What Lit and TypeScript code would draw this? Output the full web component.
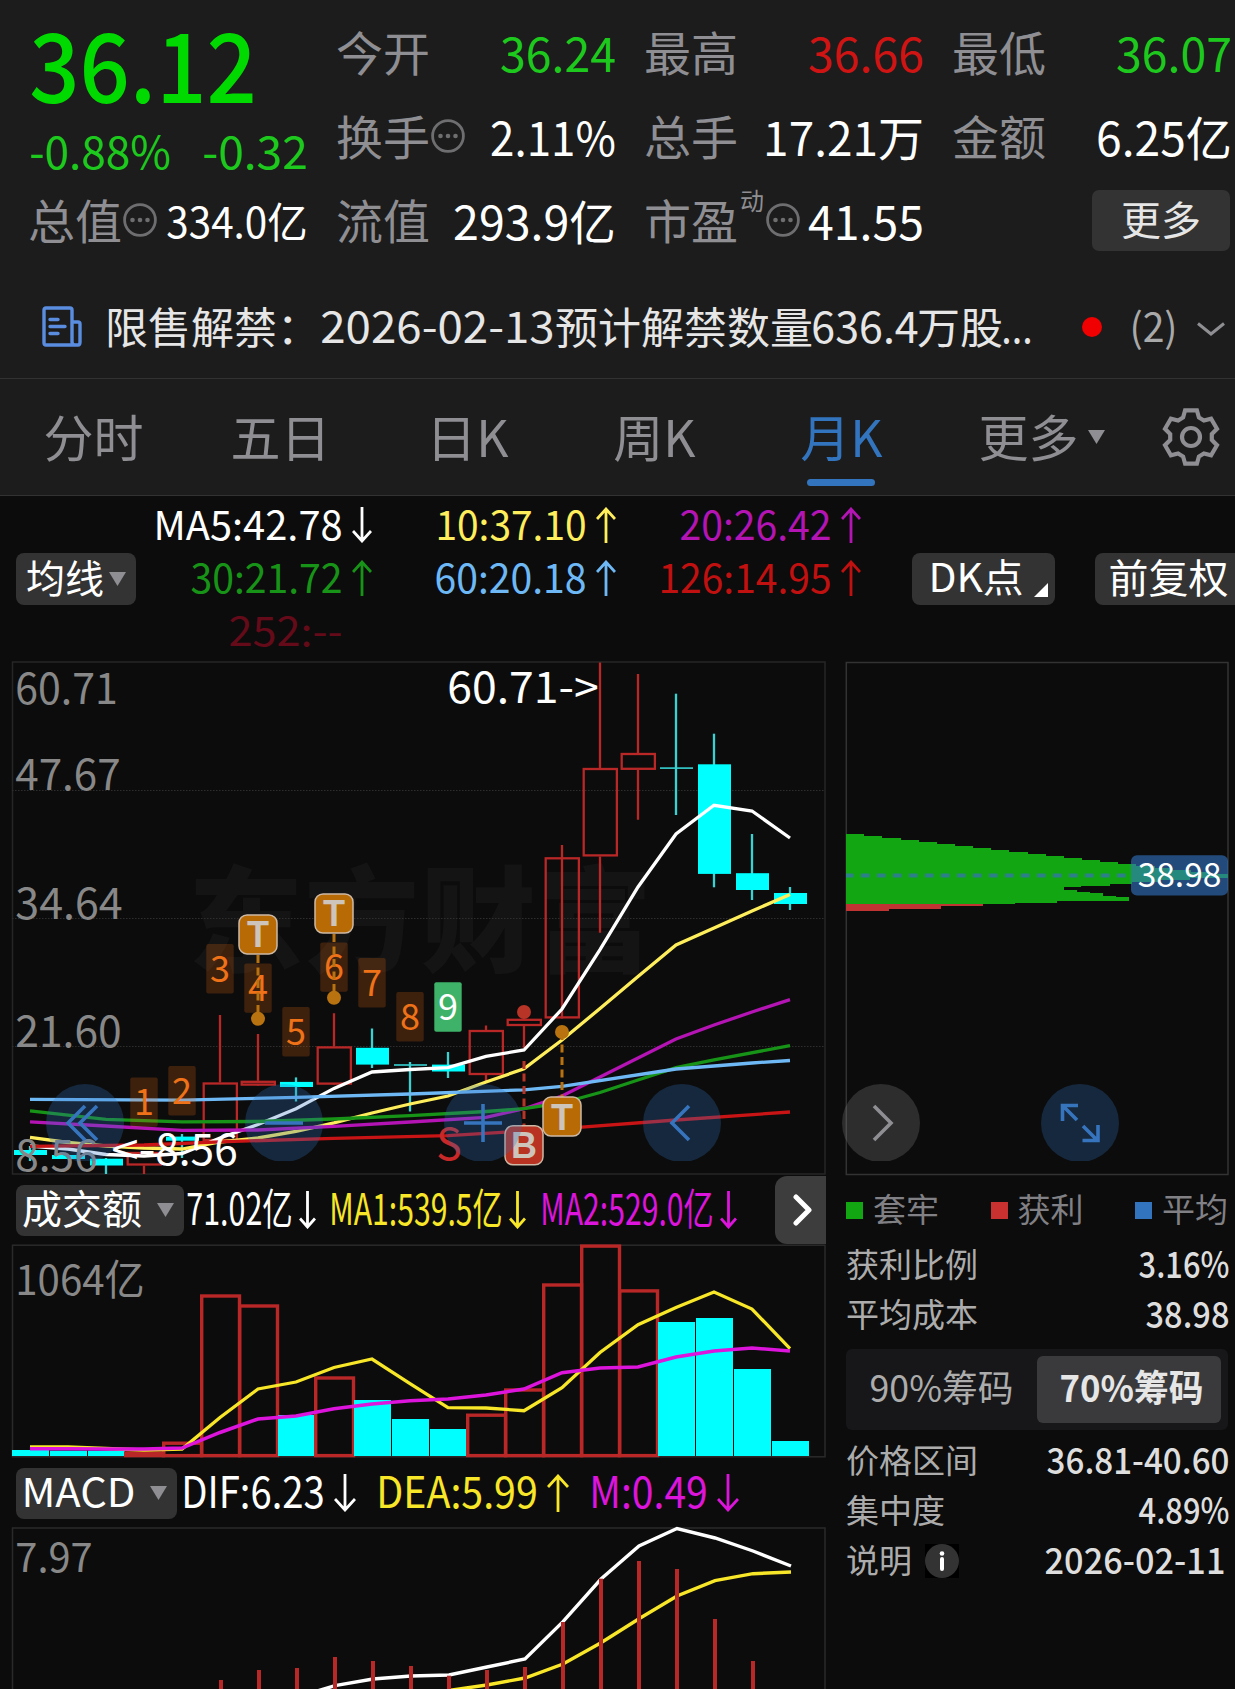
import { LitElement, html, svg, css, nothing } from "lit";
import { customElement, property } from "lit/decorators.js";

const X0 = 30;
const PITCH = 38;
const cx = (i: number) => X0 + PITCH * i;

// Indexed series -> polyline points; null entries are interpolated by the line itself
const pts = (ys: (number | null)[], shift = 0) =>
  ys.map((y, i) => (y === null ? "" : `${cx(i) + shift},${y}`)).filter(Boolean).join(" ");

// [up, bodyTop, bodyBottom, wickTop, wickBottom]
const CANDLES: [boolean, number, number, number, number][] = [
  [false, 1150, 1155, 1146, 1161],
  [false, 1155, 1159, 1155, 1159],
  [false, 1158.7, 1165.5, 1158, 1174],
  [true, 1152, 1165.5, 1152, 1174],
  [false, 1136.6, 1140.7, 1134, 1158],
  [true, 1082.5, 1141, 1015, 1141],
  [true, 1080.8, 1085.6, 1034, 1085],
  [false, 1081.9, 1087, 1077.4, 1101.5],
  [true, 1046.4, 1084.6, 1013.3, 1084],
  [false, 1047.8, 1064.6, 1028.5, 1068],
  [false, 1064.2, 1065.8, 1062, 1111.5],
  [false, 1064.6, 1071.5, 1052, 1078],
  [true, 1030, 1075, 1025.4, 1082],
  [true, 1018.8, 1026, 1006, 1048],
  [true, 857.3, 1018.4, 845, 857],
  [true, 768, 856.4, 662.4, 932.7],
  [true, 753, 769.8, 674, 819.8],
  [false, 767.3, 768.9, 693.7, 815],
  [false, 764.3, 873.9, 733.7, 887.3],
  [false, 873.2, 890, 834, 900],
  [false, 893, 904, 887, 910],
];

const N = null;
const MA_LINES: [string, (number | null)[]][] = [
  ["#ffffff", [1146, 1149, 1154.5, 1156, 1153.5, 1138, 1124.5, 1108.7, 1088.4, 1072, 1069.5, 1067.7, 1056.4, 1050, 1009, 949.6, 887, 834, 805.3, 811, 838]],
  ["#ffee5c", [1137.3, 1142.5, 1146, 1148, 1149, 1142, 1138, 1131.5, 1122.8, 1113, 1104, 1096, 1082, 1068.8, 1040, 1008.5, 976.5, 945, 928, 911, 894.5]],
  ["#b414b4", [1121.8, N, 1126, N, 1130.4, N, 1130, N, 1126.3, N, 1122, N, 1117.3, 1108.7, 1096, 1077, 1058, 1039, 1025, 1012, 999.6]],
  ["#179417", [1110.8, N, 1119.4, N, 1121.8, N, 1121.5, N, 1119, N, 1115.6, N, 1111.5, 1108.7, 1103, 1092.5, 1080, 1067.7, 1059.8, N, 1045.7]],
  ["#c81414", [1146.3, N, N, 1145, N, 1141.8, N, N, 1138.3, N, N, 1135.6, N, N, 1128.7, N, N, 1120, N, N, 1112]],
  ["#6eb9f5", [1099.4, N, N, N, 1100.2, N, N, 1097.4, N, N, 1094, N, N, 1089.8, 1086.3, N, N, 1069, N, 1063, 1060.5]],
];

// [index, top, label]
const TAGS: [number, number, string][] = [
  [3, 1077.4, "1"], [4, 1066, "2"], [5, 944, "3"], [6, 963.4, "4"], [7, 1007, "5"],
  [8, 942.4, "6"], [9, 958, "7"], [10, 992, "8"], [11, 982.3, "9"],
];

const VOL: [boolean, number][] = [
  [false, 1450], [false, 1450.7], [false, 1450.7], [true, 1451.5], [true, 1441.7],
  [true, 1294.5], [true, 1304.5], [false, 1415], [true, 1376.5], [false, 1400],
  [false, 1419], [false, 1429], [true, 1413.7], [true, 1388.5], [true, 1283.5],
  [true, 1244.6], [true, 1289.4], [false, 1322], [false, 1318], [false, 1369], [false, 1441],
];
const VOL_MA1 = [1447, 1447, 1448.5, 1450, 1449, 1417.5, 1389, 1382, 1367.5, 1359, 1383.7, 1407.7, 1408, 1410.7, 1387.7, 1352.5, 1324.7, 1307.5, 1292, 1309, 1348.7];
const VOL_MA2 = [1448.7, 1448.7, 1448.9, 1448.9, 1448, 1432.5, 1419, 1416, 1408.7, 1404, 1400.7, 1399, 1395, 1389, 1372.7, 1368, 1367, 1357, 1351, 1348, 1351];

const MACD_BARS: (number | null)[] = [N, N, N, N, N, 1680, 1670, 1668, 1657, 1661, 1666, 1675.7, 1670, 1667, 1622, 1578.7, 1561, 1569, 1619, 1661];
const DIF: (number | null)[] = [N, N, N, N, N, N, 1710, 1697, 1685.7, 1679, 1676, 1675, 1667, 1659, 1621.7, 1579, 1546, 1528.5, 1538, 1551, 1566];
const DEA: (number | null)[] = [N, N, N, N, N, N, N, N, N, N, 1697, 1690.5, 1685, 1678, 1664, 1642.7, 1618.7, 1596, 1580.7, 1573.7, 1572];

// Chip distribution rows: [top, bottom, right edge]
const CHIPS: [number, number, number][] = [
  ...Array.from({ length: 20 }, (_, k): [number, number, number] => [834.4 + k * 1.98, 837.4 + k * 1.98, 864.2 + k * 18.15]),
  [873.8, 878, 1227.5], [877.4, 880, 1190], [879.4, 882, 1160], [881.4, 884, 1132],
  [883, 885.5, 1110], [885, 887, 1081], [886.3, 888, 1051.6], [887.4, 890, 1064.3],
  [889.6, 892, 1077], [891.6, 894, 1090], [893.4, 896, 1103], [895.5, 898, 1116],
  [897.2, 901, 1128.7], [900.6, 902.6, 1057.3], [902.2, 904.4, 1015],
];

// Single text run stretched to a given visible width
const fit = (text: string, size: number, w: number, dy = 0) => html`
  <svg class="fit" width=${w} height=${1.45 * size} aria-label=${text}>
    <text x=${-0.04 * size} y=${1.161 * size + dy} font-size=${size}
      textLength=${w + 0.08 * size} lengthAdjust="spacingAndGlyphs">${text}</text>
  </svg>`;

const st = (text: string, x: number, y: number, size: number, w: number, fill: string) => svg`
  <text x=${x - 0.04 * size} y=${y} font-size=${size} fill=${fill}
    textLength=${w + 0.08 * size} lengthAdjust="spacingAndGlyphs">${text}</text>`;

const arrow = (up: boolean, w = 20, h = 36) => html`
  <svg class="arrow" width=${w} height=${h} fill="none" stroke="currentColor" stroke-width="2.8">
    <path d=${up
      ? `M${w / 2} ${h}V2M1 ${w / 2 + 2}L${w / 2} 2L${w - 1} ${w / 2 + 2}`
      : `M${w / 2} 0V${h - 2}M1 ${h - w / 2 - 2}L${w / 2} ${h - 2}L${w - 1} ${h - w / 2 - 2}`}></path>
  </svg>`;

const dots = html`
  <svg class="dots" width="34" height="34" viewBox="0 0 34 34" fill="#6e6e70">
    <circle cx="17" cy="17" r="15.4" fill="none" stroke="#6e6e70" stroke-width="2.8"></circle>
    <circle cx="9.5" cy="17" r="2.3"></circle><circle cx="17" cy="17" r="2.3"></circle><circle cx="24.5" cy="17" r="2.3"></circle>
  </svg>`;

const caret = html`<svg class="caret" width="17" height="14"><path d="M0 0H17L8.5 14Z" fill="#8e8e93"></path></svg>`;

const gearPath = (() => {
  const out: string[] = [];
  for (let k = 0; k < 6; k++) {
    for (const [d, r] of [[-22, 21], [-12.5, 27.3], [12.5, 27.3], [22, 21]]) {
      const a = ((k * 60 - 90 + d) * Math.PI) / 180;
      out.push(`${(29 + r * Math.cos(a)).toFixed(1)} ${(29 + r * Math.sin(a)).toFixed(1)}`);
    }
  }
  return `M${out.join("L")}Z`;
})();

const shared = css`
  :host { display: block; font-family: "Noto Sans CJK SC", "Noto Sans", sans-serif; }
  svg { display: block; flex: none; }
  .fit { overflow: visible; }
  .fit text { fill: currentColor; }
`;

@customElement("quote-header")
class QuoteHeader extends LitElement {
  static styles = [shared, css`
    :host { background: #1c1c1c; color: #fff; }
    .quote { display: grid; grid-template-columns: 276px 281px 281px 281px; column-gap: 27px;
      padding: 9px 0 0 30px; height: 261px; box-sizing: border-box; }
    .lead, .col { display: flex; flex-direction: column; }
    .price { height: 106px; display: flex; align-items: center; color: #00da00; font-weight: 500; padding-left: 3px; }
    .change { height: 62px; display: flex; align-items: center; justify-content: space-between; color: #1dc91d; box-sizing: border-box; padding: 6px 0 0 1px; }
    .cell { height: 84px; display: flex; align-items: center; justify-content: space-between; }
    .label { font-size: 47px; line-height: 84px; color: #8e8e93; display: flex; align-items: center; padding-left: 3px; }
    .lead .label { padding-left: 0; margin-left: -2px; }
    .dots { margin: 2px 0 0 1px; }
    .up { color: #d01414; }
    .down { color: #1dc91d; }
    .sup { font-size: 24px; line-height: 24px; margin: 0 1px 38px 2px; }
    .more { width: 138px; height: 61px; margin: 2px 0 0 auto; border-radius: 7px; background: #333; color: #e6e6e6;
      font-size: 40px; line-height: 57px; text-align: center; }
    .news { height: 118px; box-sizing: border-box; border-bottom: 1px solid #323232; padding: 10px 10px 0 42px;
      display: flex; align-items: center; font-size: 43px; color: #e6e6e6; white-space: nowrap; }
    .icon { margin-top: 4px; }
    .title { margin-left: 23px; }
    .date { margin: 0 2px; }
    .dot { width: 20px; height: 20px; border-radius: 50%; background: #f00000; margin-left: auto; margin-top: 5px; }
    .count { color: #a9a9a9; margin: 0 21px 0 29px; }
    .chev { margin-top: 8px; }
  `];
  render() {
    const cell = (label: unknown, value: unknown, cls = "") => html`
      <div class="cell"><span class="label">${label}</span><span class=${cls}>${value}</span></div>`;
    return html`
      <div class="quote">
        <div class="lead">
          <div class="price">${fit("36.12", 96, 220)}</div>
          <div class="change">${fit("-0.88%", 45.5, 138)}${fit("-0.32", 45.5, 102)}</div>
          ${cell(html`总值${dots}`, fit("334.0亿", 42, 138))}
        </div>
        <div class="col">
          ${cell("今开", fit("36.24", 47, 112), "down")}
          ${cell(html`换手${dots}`, fit("2.11%", 47, 122))}
          ${cell("流值", fit("293.9亿", 47, 159))}
        </div>
        <div class="col">
          ${cell("最高", fit("36.66", 47, 112), "up")}
          ${cell("总手", fit("17.21万", 47, 157))}
          ${cell(html`市盈<span class="sup">动</span>${dots}`, fit("41.55", 47, 112))}
        </div>
        <div class="col">
          ${cell("最低", fit("36.07", 47, 112), "down")}
          ${cell("金额", fit("6.25亿", 47, 132))}
          <div class="cell"><span class="more">更多</span></div>
        </div>
      </div>
      <div class="news">
        <svg class="icon" width="40" height="41" viewBox="0 0 40 41" fill="none" stroke="#5a8de0" stroke-width="3.4">
          <path d="M32 39H4Q2 39 2 37V4Q2 2 4 2H28Q30 2 30 4V36Q30 39 33 39H36Q38 39 38 36V18Q38 16 36 16H31"></path>
          <path d="M8 13.5H16M8 20.5H23M8 27.5H16" stroke-linecap="round"></path>
        </svg>
        <span class="title">限售解禁：</span>
        <span class="date">${fit("2026-02-13", 43, 231)}</span>
        <span>预计解禁数量</span>${fit("636.4", 43, 104)}<span>万股</span>${fit("...", 43, 28)}
        <i class="dot"></i>
        <span class="count">${fit("(2)", 40, 45)}</span>
        <svg class="chev" width="28" height="14" fill="none" stroke="#8e8e93" stroke-width="3"><path d="M1 1.5L14 12L27 1.5"></path></svg>
      </div>`;
  }
}

@customElement("period-tabs")
class PeriodTabs extends LitElement {
  static styles = [shared, css`
    :host { background: #1c1c1c; }
    .tabs { height: 117px; box-sizing: border-box; border-bottom: 1px solid #323232; display: flex; align-items: center; color: #8e8e93; }
    .tab { width: 187px; height: 116px; box-sizing: border-box; display: flex; align-items: center; justify-content: center;
      position: relative; font-size: 50px; line-height: 112px; padding-bottom: 4px; }
    .active { color: #3274be; }
    .active::after { content: ""; position: absolute; left: 59px; bottom: 9px; width: 68px; height: 7px; border-radius: 4px; background: #3274be; }
    .caret { margin: 3px -26px 0 9px; }
    .gear { margin-left: 40px; }
  `];
  render() {
    return html`<div class="tabs">
      ${["分时", "五日", "日K", "周K", "月K", "更多"].map((t) => html`
        <div class="tab ${t === "月K" ? "active" : ""}">${t}${t === "更多" ? caret : nothing}</div>`)}
      <svg class="gear" width="58" height="58" fill="none" stroke="#8e8e93" stroke-width="4.2">
        <path d=${gearPath}></path><circle cx="29" cy="29" r="9"></circle>
      </svg>
    </div>`;
  }
}

@customElement("ma-bar")
class MaBar extends LitElement {
  static styles = [shared, css`
    .bar { height: 160px; display: grid; grid-template-columns: 128px repeat(3, 244.5px) 1fr; grid-template-rows: repeat(3, 53.4px); overflow: hidden; }
    .ma { display: flex; align-items: center; justify-content: flex-end; gap: 11px; }
    .arrow { margin: 4px 1px 0 0; }
    .none { padding-right: 32px; }
    .c5 { color: #fff; } .c10 { color: #ffee5c; } .c20 { color: #b414b4; }
    .c30 { color: #179417; } .c60 { color: #6eb9f5; } .c126 { color: #c01010; } .c252 { color: #640a19; }
    .btn { box-sizing: border-box; height: 52px; border-radius: 8px; background: #333; color: #fff; font-size: 39px;
      display: flex; align-items: center; white-space: nowrap; align-self: center; margin-top: 5px; }
    .avg { grid-row: 2; grid-column: 1; margin-left: 16px; width: 120px; padding-left: 10px; }
    .cap { line-height: 46px; padding-bottom: 6px; }
    .avg .caret { margin-left: 5px; }
    .opts { grid-row: 2; grid-column: 5; display: flex; gap: 40px; padding-left: 50px; align-items: center; }
    .dk { width: 143px; padding-left: 18px; flex: none; }
    .corner { margin: 23px 0 0 12px; }
    .fq { width: 160px; padding-left: 14px; flex: none; font-size: 40px; }
  `];
  render() {
    const ma = (cls: string, t: string, w: number, up: boolean) =>
      html`<div class="ma ${cls}">${fit(t, 40, w)}${arrow(up)}</div>`;
    return html`<div class="bar">
      <span></span>
      ${ma("c5", "MA5:42.78", 186, false)}${ma("c10", "10:37.10", 148, true)}${ma("c20", "20:26.42", 149, true)}
      <span></span>
      <div class="btn avg"><span class="cap">均线</span>${caret}</div>
      ${ma("c30", "30:21.72", 149, true)}${ma("c60", "60:20.18", 149, true)}${ma("c126", "126:14.95", 170, true)}
      <div class="opts">
        <div class="btn dk">${fit("DK点", 39, 92, -3)}<svg class="corner" width="14" height="14"><path d="M14 0V14H0Z" fill="#fff"></path></svg></div>
        <div class="btn fq"><span class="cap">前复权</span></div>
      </div>
      <span></span>
      <div class="ma c252 none">${fit("252:--", 40, 111)}</div>
    </div>`;
  }
}

@customElement("k-chart")
class KChart extends LitElement {
  static styles = [shared, css`
    .tag { font-size: 36px; text-anchor: middle; }
    .mark { font: bold 36px "Liberation Sans", sans-serif; text-anchor: middle; fill: #cdc4bb; }
    .wm { font-size: 115px; font-weight: 900; fill: #141414; }
  `];
  private badge(x: number, top: number, ch: string, color: string) {
    return svg`<rect x=${x - 19} y=${top + 0.6} width="38" height="39" rx="8" fill=${color} stroke="#cdb9a5" stroke-width="1.5"></rect>
      <text class="mark" x=${x} y=${top + 33}>${ch}</text>`;
  }
  private pin(x: number, dot: number, a: number, b: number, color: string) {
    return svg`<circle cx=${x} cy=${dot} r="7" fill=${color}></circle>
      <path d="M${x} ${a}V${b}" stroke=${color} stroke-width="3" stroke-dasharray="8 4.5"></path>`;
  }
  render() {
    return html`<svg width="838" height="520" viewBox="0 656 838 520" fill="none">
      <text class="wm" x="188" y="963" textLength="464">东方财富</text>
      <rect x="12.5" y="662" width="812.5" height="512" stroke="#262626" stroke-width="1.5"></rect>
      <path d="M12 790.5H825M12 918.5H825M12 1046.5H825" stroke="#2e2e2e" stroke-dasharray="1.5 1.5"></path>
      ${CANDLES.map(([up, t, b, wt, wb], i) => up
        ? svg`<path d="M${cx(i)} ${wt}V${t}M${cx(i)} ${b}V${wb}" stroke="#b92727" stroke-width="2.3"></path>
            <rect x=${cx(i) - 16.3} y=${t + 1} width="33.2" height=${Math.max(b - t - 2, 1)} stroke="#b92727" stroke-width="2.3"></rect>`
        : svg`<path d="M${cx(i)} ${wt}V${wb}" stroke="#37d2d2" stroke-width="2.3"></path>
            <rect x=${cx(i) - 16} y=${t} width="33" height=${b - t} fill=${b - t < 2 ? "#37d2d2" : "#00ffff"}></rect>`)}
      ${MA_LINES.map(([c, ys]) => svg`<polyline points=${pts(ys)} stroke=${c} stroke-width="3.3"></polyline>`)}
      ${st("60.71", 17, 704, 43, 99, "#888888")}
      ${st("47.67", 17, 790, 43, 102, "#888888")}
      ${st("34.64", 17, 919, 43, 104, "#888888")}
      ${st("21.60", 17, 1047, 43, 103, "#888888")}
      ${st("8.56", 17, 1171, 43, 79, "#888888")}
      ${st("60.71->", 449, 703, 43, 148, "#ffffff")}
      ${st("<-", 113, 1165, 43, 41, "#ffffff")}
      ${st("8.56", 157, 1165, 43, 79, "#ffffff")}
      ${TAGS.map(([i, top, n]) => svg`
        <rect x=${cx(i) - 13.7} y=${top} width="27.4" height="49.4" rx="2" fill=${n === "9" ? "#3eb269" : "#f06e14"} fill-opacity=${n === "9" ? 1 : 0.22}></rect>
        <text class="tag" x=${cx(i)} y=${top + 37.8} fill=${n === "9" ? "#ffffff" : "#f07218"}>${n}</text>`)}
      ${this.pin(258, 1018.8, 955, 1019, "#b8720f")}
      ${this.pin(334, 997.8, 934, 998, "#b8720f")}
      ${this.pin(562, 1032, 1032, 1097, "#b8720f")}
      ${this.pin(524, 1012, 1061, 1126, "#b83426")}
      ${this.badge(258, 914.3, "T", "#b86b05")}
      ${this.badge(334, 893.4, "T", "#b86b05")}
      ${this.badge(562, 1096.5, "T", "#b86b05")}
      ${this.badge(524, 1125.2, "B", "#b83322")}
      ${st("S", 438, 1160, 44, 22, "#c82828")}
    </svg>`;
  }
}

@customElement("chip-chart")
class ChipChart extends LitElement {
  static styles = [shared, css`.chips { shape-rendering: crispEdges; }`];
  render() {
    return html`<svg width="397" height="520" viewBox="838 656 397 520" fill="none">
      <rect x="846.3" y="662.5" width="381.7" height="512" stroke="#333333" stroke-width="1.5"></rect>
      <g class="chips">
        <path d="M846 903H983V906.2H941V908.5H889V911H846Z" fill="#c03434"></path>
        ${CHIPS.map(([t, b, r]) => svg`<path d="M846 ${t}H${Math.min(r, 1227.5)}V${b}H846Z" fill="#12a612"></path>`)}
      </g>
      <path d="M846 875.6H1128" stroke="#2d7f8c" stroke-width="4" stroke-dasharray="8.5 7.5" stroke-dashoffset="1"></path>
      <rect x="1131" y="855.3" width="97" height="40.2" rx="6" fill="#3276c6" fill-opacity="0.6"></rect>
      ${st("38.98", 1139, 887.3, 33.5, 81, "#ffffff")}
    </svg>`;
  }
}

@customElement("indicator-head")
class IndicatorHead extends LitElement {
  @property() kind = "vol";
  static styles = [shared, css`
    .row { height: 68px; display: flex; align-items: center; padding-left: 16px; box-sizing: border-box; }
    .macd { height: 66px; }
    .pick { width: 168px; height: 51px; border-radius: 8px; background: #333; color: #fff; box-sizing: border-box;
      padding: 0 10px 0 6px; display: flex; align-items: center; justify-content: space-between; font-size: 40px; flex: none; }
    .cap { line-height: 45px; padding-bottom: 6px; }
    .macd .pick { width: 161px; padding-left: 7px; }
    .w, .y, .m { display: flex; align-items: center; gap: 8px; }
    .macd .w, .macd .y, .macd .m { gap: 11px; }
    .w { color: #fff; margin-left: 4px; }
    .macd .w { margin-left: 6px; }
    .y { color: #f8e628; margin-left: 15px; }
    .macd .y { margin-left: 22px; }
    .m { color: #dc14dc; margin-left: 16px; }
    .macd .m { margin-left: 22px; }
    .next { margin-left: auto; margin-right: 12px; width: 51px; height: 68px; background: #3d3d3d; border-radius: 12px 0 0 12px;
      display: flex; align-items: center; justify-content: center; flex: none; padding-left: 4px; box-sizing: border-box; }
  `];
  render() {
    if (this.kind === "vol") {
      return html`<div class="row">
        <div class="pick"><span class="cap">成交额</span>${caret}</div>
        <div class="w">${fit("71.02亿", 43, 103, -4)}${arrow(false, 17, 38)}</div>
        <div class="y">${fit("MA1:539.5亿", 43, 170, -4)}${arrow(false, 17, 38)}</div>
        <div class="m">${fit("MA2:529.0亿", 43, 170, -4)}${arrow(false, 17, 38)}</div>
        <div class="next"><svg width="20" height="32" fill="none" stroke="#fff" stroke-width="5" stroke-linecap="round" stroke-linejoin="round"><path d="M3 3L16 16L3 29"></path></svg></div>
      </div>`;
    }
    return html`<div class="row macd">
      <div class="pick">${fit("MACD", 40, 111, -3.5)}${caret}</div>
      <div class="w">${fit("DIF:6.23", 44, 140, -4)}${arrow(false, 22, 38)}</div>
      <div class="y">${fit("DEA:5.99", 44, 158, -4)}${arrow(true, 22, 38)}</div>
      <div class="m">${fit("M:0.49", 44, 115, -4)}${arrow(false, 22, 38)}</div>
    </div>`;
  }
}

@customElement("volume-chart")
class VolumeChart extends LitElement {
  static styles = [shared];
  render() {
    return html`<svg width="838" height="216" viewBox="0 1244 838 216" fill="none">
      <rect x="12.5" y="1245.2" width="812.5" height="211.6" stroke="#2a2a2a" stroke-width="1.5"></rect>
      ${st("1064亿", 17, 1294.6, 41.5, 126, "#888888")}
      ${VOL.map(([up, t], i) => up
        ? svg`<rect x=${cx(i) - 18.3} y=${t + 1.5} width="37.8" height=${1455.6 - t - 1.5} stroke="#b92727" stroke-width="3.4"></rect>`
        : svg`<rect x=${cx(i) - 18} y=${t} width="37" height=${1456 - t} fill="#00ffff"></rect>`)}
      <polyline points=${pts(VOL_MA1)} stroke="#f8e628" stroke-width="3.3"></polyline>
      <polyline points=${pts(VOL_MA2)} stroke="#dc14dc" stroke-width="3.5"></polyline>
    </svg>`;
  }
}

@customElement("macd-chart")
class MacdChart extends LitElement {
  static styles = [shared];
  render() {
    return html`<svg width="838" height="163" viewBox="0 1526 838 163" fill="none">
      <rect x="12.5" y="1528" width="812.5" height="200" stroke="#2a2a2a" stroke-width="1.5"></rect>
      ${st("7.97", 17, 1572, 41, 74, "#888888")}
      <polyline points=${pts(DIF, 1)} stroke="#ffffff" stroke-width="3.4"></polyline>
      <polyline points=${pts(DEA, 1)} stroke="#f8e628" stroke-width="3.4"></polyline>
      ${MACD_BARS.map((t, i) => t === null ? nothing : svg`<rect x=${cx(i) - 1} y=${t} width="4" height=${1700 - t} fill="#b92727"></rect>`)}
    </svg>`;
  }
}

@customElement("chip-info")
class ChipInfo extends LitElement {
  static styles = [shared, css`
    .info { padding: 0 7px 0 8px; color: #acacac; font-size: 33px; }
    .legend { height: 63px; display: flex; justify-content: space-between; align-items: center; color: #808085; padding-top: 1px; box-sizing: border-box; }
    .legend span { display: flex; align-items: center; gap: 10px; line-height: 60px; }
    .legend i { width: 17px; height: 17px; margin-top: 5px; }
    .g { background: #12a612; } .r { background: #c93030; } .b { background: #3274be; }
    .row { height: 50px; display: flex; align-items: center; justify-content: space-between; }
    .row > span { line-height: 46px; display: flex; align-items: center; padding-bottom: 3px; }
    .val { color: #dedede; font-weight: 500; }
    .date { margin-right: 4px; }
    .seg { height: 81px; box-sizing: border-box; margin: 9.5px 0 6px; padding: 7px; border-radius: 6px; background: #17171a; display: flex; }
    .seg > div { width: 184px; box-sizing: border-box; display: flex; align-items: center; justify-content: center; border-radius: 6px; }
    .seg > .off { padding-right: 8px; }
    .seg > .on { background: #3a3a3c; color: #e6e6e6; font-weight: 700; padding-left: 5px; }
    .i { margin-left: 13px; margin-top: 4px; }
  `];
  render() {
    const row = (l: unknown, v: string, w: number, cls = "") => html`
      <div class="row"><span>${l}</span><div class="val ${cls}">${fit(v, 36, w, -2)}</div></div>`;
    return html`<div class="info">
      <div class="legend"><span><i class="g"></i>套牢</span><span><i class="r"></i>获利</span><span><i class="b"></i>平均</span></div>
      ${row("获利比例", "3.16%", 88)}
      ${row("平均成本", "38.98", 81)}
      <div class="seg"><div class="off">${fit("90%筹码", 37, 141, -3)}</div><div class="on">${fit("70%筹码", 37, 141, -3)}</div></div>
      ${row("价格区间", "36.81-40.60", 180)}
      ${row("集中度", "4.89%", 88)}
      ${row(html`说明<svg class="i" width="34" height="34"><rect width="34" height="34" fill="#000"></rect><circle cx="17" cy="17" r="17" fill="#333"></circle><path d="M17 15V25" stroke="#fff" stroke-width="4" stroke-linecap="round"></path><circle cx="17" cy="9.5" r="2.3" fill="#fff"></circle></svg>`, "2026-02-11", 178, "date")}
    </div>`;
  }
}

@customElement("app-root")
class AppRoot extends LitElement {
  static styles = [shared, css`
    :host { width: 1235px; height: 1689px; overflow: hidden; background: #0c0c0c; }
    .main { position: relative; display: grid; grid-template-columns: 838px 397px; }
    .controls { position: absolute; left: 46px; top: 428px; display: flex; gap: 121px; }
    .ctl { width: 78px; height: 77px; overflow: hidden; }
  `];
  render() {
    const ctl = (d: string, on = true) => html`
      <svg class="ctl" viewBox="0 0 78 77" fill="none">
        <circle cx="39" cy="39" r="39" fill=${on ? "#3274be" : "#8e8e93"} fill-opacity=${on ? 0.28 : 0.25}></circle>
        <path d=${d} stroke=${on ? "#3674be" : "#8e8e93"} stroke-width="3.6"></path>
      </svg>`;
    return html`
      <quote-header></quote-header>
      <period-tabs></period-tabs>
      <ma-bar></ma-bar>
      <div class="main">
        <div>
          <k-chart></k-chart>
          <indicator-head kind="vol"></indicator-head>
          <volume-chart></volume-chart>
          <indicator-head kind="macd"></indicator-head>
          <macd-chart></macd-chart>
        </div>
        <div>
          <chip-chart></chip-chart>
          <chip-info></chip-info>
        </div>
        <div class="controls">
          ${ctl("M39 22L22 39L39 56M51 22L34 39L51 56")}
          ${ctl("M20 39H58")}
          ${ctl("M20 39H58M39 20V58")}
          ${ctl("M46 22L29 39L46 56")}
          ${ctl("M32 22L49 39L32 56", false)}
          ${ctl("M21.5 37V21.5H37M22 22L36 36M57 41V56.5H41.5M56 56L42 42")}
        </div>
      </div>`;
  }
}
